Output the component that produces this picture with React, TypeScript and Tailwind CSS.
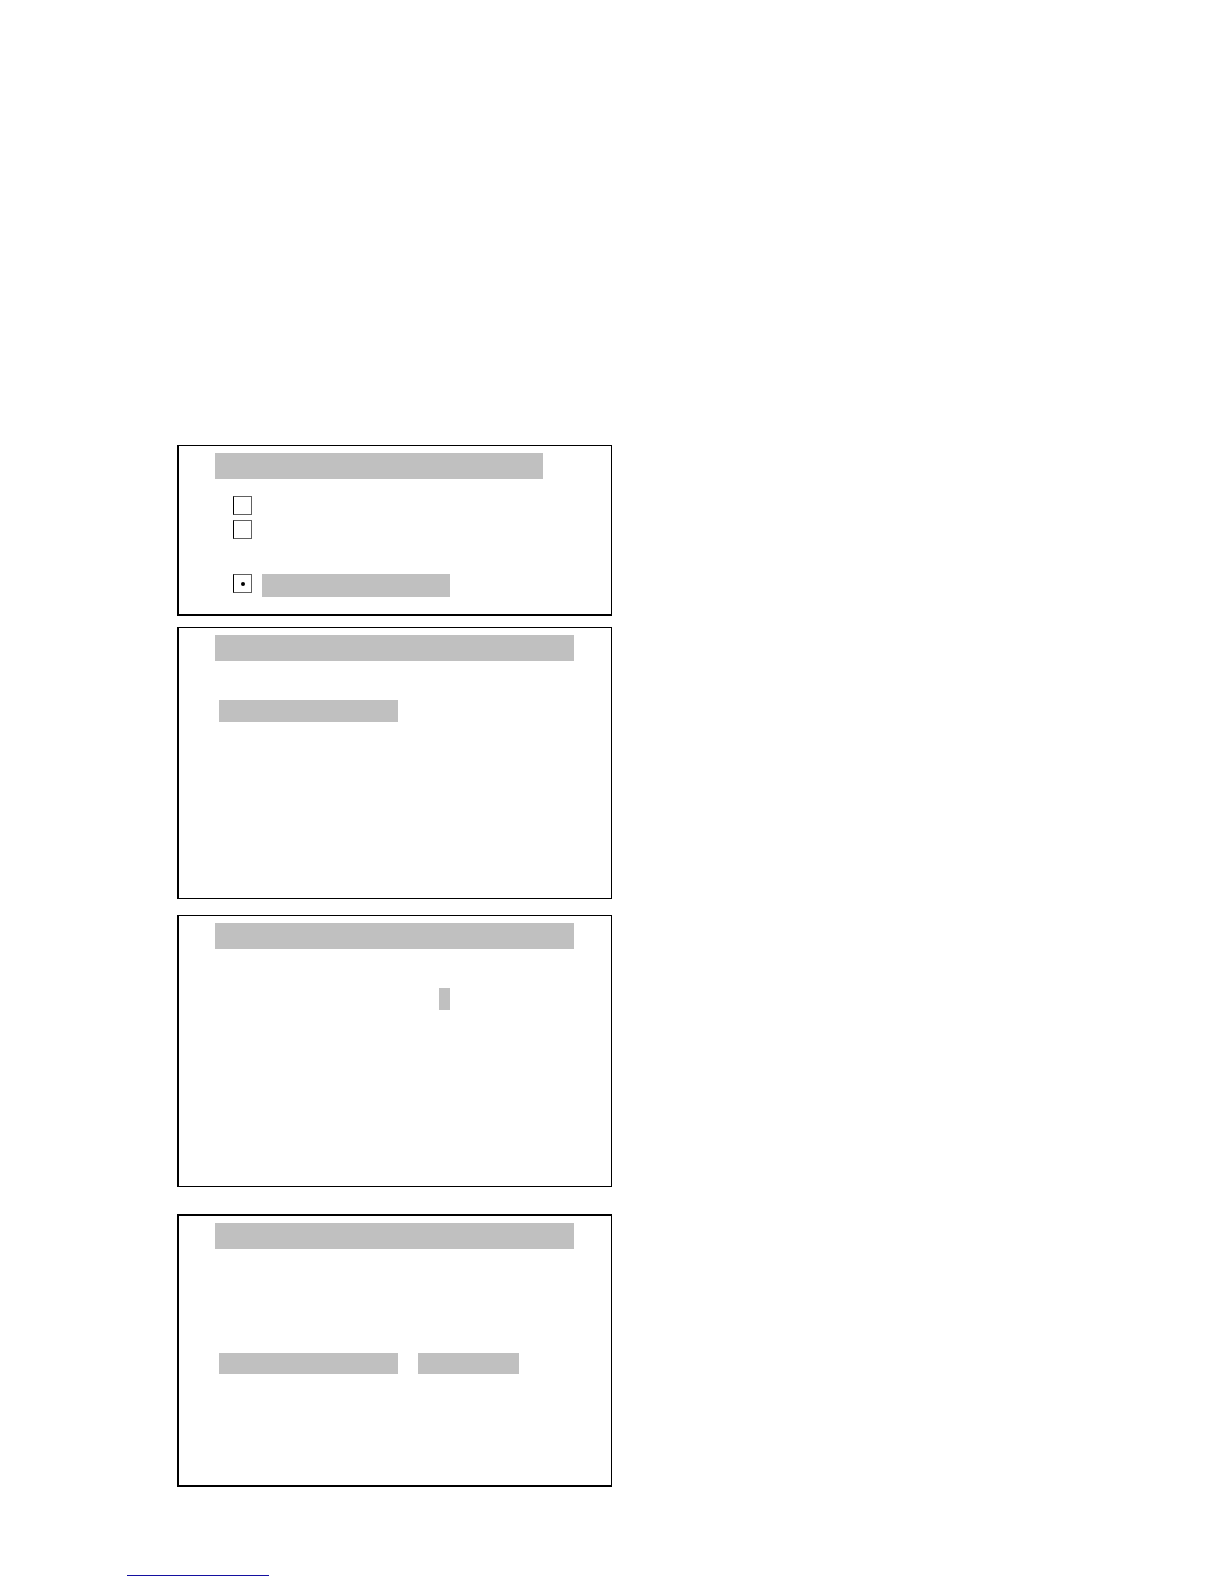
import type { ReactNode } from 'react';
import clsx from 'clsx';

interface PanelProps {
  label: string;
  titleClass: string;
  className: string;
  children: ReactNode;
}

function Panel({ label, titleClass, className, children }: PanelProps) {
  return (
    <section
      aria-label={label}
      className={clsx('w-full max-w-[435px] border-black border-l-2 border-r pt-[7px]', className)}
    >
      <div className="px-9">
        <div className={clsx('h-[26px] w-full bg-[#c0c0c0]', titleClass)} />
      </div>
      {children}
    </section>
  );
}

function Highlight({ className }: { className: string }) {
  return <div className={clsx('bg-[#c0c0c0]', className)} />;
}

function Option({ label, checked = false }: { label: string; checked?: boolean }) {
  return (
    <input
      type="radio"
      name="option"
      aria-label={label}
      defaultChecked={checked}
      className="grid size-[19px] shrink-0 appearance-none place-items-center border border-[#606060] border-l-black checked:before:size-1 checked:before:rounded-full checked:before:bg-black checked:before:content-['']"
    />
  );
}

export default function App() {
  return (
    <div className="min-h-screen bg-white pt-[445px] pb-2 font-['Liberation_Sans',sans-serif]">
      <main className="pl-[177px] pr-4">
        <Panel label="Options" titleClass="max-w-[328px]" className="border-t border-b-2 pb-[17px]">
          <div className="mt-[17px] flex flex-col gap-[5px] pl-[54px]">
            <Option label="Option 1" />
            <Option label="Option 2" />
          </div>
          <div className="mt-[35px] flex items-start gap-[10px] pl-[54px]">
            <Option label="Option 3" checked />
            <Highlight className="h-[23px] w-[188px]" />
          </div>
        </Panel>

        <Panel label="Screen 1" titleClass="max-w-[359px]" className="mt-[11px] border-y pb-[176px]">
          <div className="mt-[39px] pl-10">
            <Highlight className="h-[22px] w-[179px]" />
          </div>
        </Panel>

        <Panel label="Screen 2" titleClass="max-w-[359px]" className="mt-4 border-y pb-[176px]">
          <div className="mt-[39px] flex justify-end pr-[161px]">
            <Highlight className="h-[22px] w-[11px]" />
          </div>
        </Panel>

        <Panel label="Screen 3" titleClass="max-w-[359px]" className="mt-[27px] border-y-2 pb-[111px]">
          <div className="mt-[104px] flex gap-5 pl-10">
            <Highlight className="h-[21px] w-[179px]" />
            <Highlight className="h-[21px] w-[101px]" />
          </div>
        </Panel>
      </main>

      <footer className="mt-[72px] flex pl-[127px]">
        <a href="#" aria-label="Website" className="h-[17px] w-[142px] border-b border-[#1410a0]" />
      </footer>
    </div>
  );
}
